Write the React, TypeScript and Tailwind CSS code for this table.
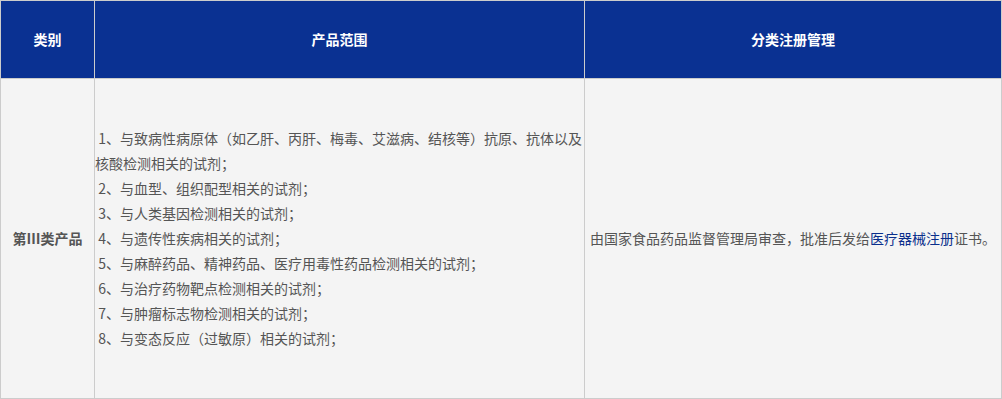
const scopeItems = [
  ["\u00a01、与致病性病原体（如乙肝、丙肝、梅毒、艾滋病、结核等）抗原、抗体以及", "核酸检测相关的试剂；"],
  ["\u00a02、与血型、组织配型相关的试剂；"],
  ["\u00a03、与人类基因检测相关的试剂；"],
  ["\u00a04、与遗传性疾病相关的试剂；"],
  ["\u00a05、与麻醉药品、精神药品、医疗用毒性药品检测相关的试剂；"],
  ["\u00a06、与治疗药物靶点检测相关的试剂；"],
  ["\u00a07、与肿瘤标志物检测相关的试剂；"],
  ["\u00a08、与变态反应（过敏原）相关的试剂；"],
];

const App = () => {
  return (
    <div className="w-[1002px] h-[399px] bg-white font-['Noto_Sans_CJK_SC','Noto_Sans',sans-serif]">
      <table className="w-[1001px] table-fixed border-collapse text-[14px]">
        <colgroup>
          <col className="w-[94px]" />
          <col className="w-[490px]" />
          <col className="w-[417px]" />
        </colgroup>
        <thead>
          <tr className="h-[78px] bg-[#0a3192] text-white font-bold">
            <th className="border border-[#cccccc] text-center">类别</th>
            <th className="border border-[#cccccc] text-center">产品范围</th>
            <th className="border border-[#cccccc] text-center">分类注册管理</th>
          </tr>
        </thead>
        <tbody>
          <tr className="h-[320px] bg-[#f4f4f4] text-[#555555]">
            <td className="border border-[#cccccc] text-center font-bold">第Ⅲ类产品</td>
            <td className="border border-[#cccccc] p-0 leading-[25px]">
              {scopeItems.map((lines, i) => (
                <div key={i} className="whitespace-nowrap">
                  {lines.map((line, j) => (
                    <div key={j}>{line}</div>
                  ))}
                </div>
              ))}
            </td>
            <td className="border border-[#cccccc] text-center px-1">
              由国家食品药品监督管理局审查，批准后发给
              <span className="text-[#0a2f8c]">医疗器械注册</span>
              证书。
            </td>
          </tr>
        </tbody>
      </table>
    </div>
  );
};

export default App;
